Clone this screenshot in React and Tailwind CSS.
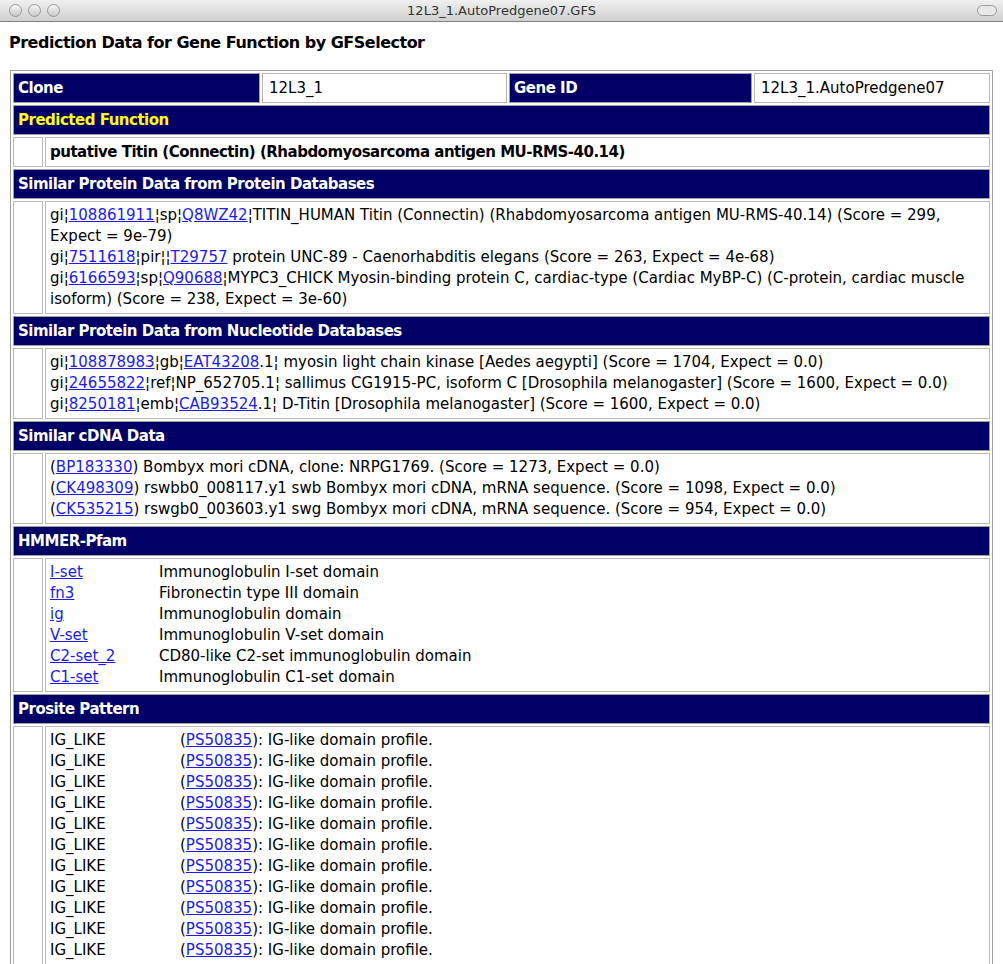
const L = ({ children }) => <a className="text-[#1a1aff] underline">{children}</a>;
const Head = ({ children, yellow }) => (
  <tr><td colSpan={4} className={`bg-[#000066] border border-[#a0a0a0] px-[4px] h-[30px] font-bold tracking-[-0.5px] ${yellow ? "text-[#ffff00]" : "text-white"}`}>{children}</td></tr>
);
const Body = ({ children }) => (
  <tr>
    <td className="border border-[#b8b8b8]"></td>
    <td colSpan={3} className="border border-[#b8b8b8] px-[4px] py-[3px] leading-[21px]">{children}</td>
  </tr>
);
const hm = [["I-set","Immunoglobulin I-set domain"],["fn3","Fibronectin type III domain"],["ig","Immunoglobulin domain"],["V-set","Immunoglobulin V-set domain"],["C2-set_2","CD80-like C2-set immunoglobulin domain"],["C1-set","Immunoglobulin C1-set domain"]];
export default function App() {
  return (
    <div className="w-[1003px] h-[964px] bg-white overflow-hidden relative text-[14px] text-black" style={{fontFamily:'"DejaVu Sans", sans-serif'}}>
      <div className="h-[22px] bg-gradient-to-b from-[#f0f0f0] to-[#d0d0d0] border-b border-[#808080] flex items-center relative">
        <div className="flex gap-[6px] ml-[9px]">
          {[0,1,2].map(i=><div key={i} className="w-[13px] h-[13px] rounded-full border border-[#999] bg-gradient-to-b from-[#f8f8f8] to-[#c8c8c8]"/>)}
        </div>
        <div className="absolute left-0 right-0 text-center text-[13px] text-[#333]">12L3_1.AutoPredgene07.GFS</div>
        <div className="absolute right-[6px] top-[5px] w-[20px] h-[11px] rounded-full border border-[#999] bg-[#e8e8e8]"/>
      </div>
      <div className="font-bold text-[16px] tracking-[-0.5px] ml-[9px] mt-[9px]">Prediction Data for Gene Function by GFSelector</div>
      <table className="ml-[10px] mt-[15px] w-[983px] table-fixed border border-[#a0a0a0] border-separate border-spacing-[2px] text-[15px]">
        <colgroup><col className="w-[30px]"/><col className="w-[215px]"/><col className="w-[245px]"/><col/></colgroup>
        <tbody>
          <tr>
            <td colSpan={2} className="bg-[#000066] text-white font-bold border border-[#a0a0a0] px-[4px] h-[30px] tracking-[-0.5px]">Clone</td>
            <td className="border border-[#b8b8b8] px-[6px]">12L3_1</td>
            <td className="p-0">
              <div className="flex h-[30px]">
                <div className="bg-[#000066] text-white font-bold border border-[#a0a0a0] px-[4px] w-[243px] flex items-center tracking-[-0.5px]">Gene ID</div>
                <div className="border border-[#b8b8b8] px-[6px] flex-1 ml-[2px] flex items-center">12L3_1.AutoPredgene07</div>
              </div>
            </td>
          </tr>
          <Head yellow>Predicted Function</Head>
          <tr><td className="border border-[#b8b8b8]"></td><td colSpan={3} className="border border-[#b8b8b8] px-[4px] h-[30px] font-bold tracking-[-0.5px]">putative Titin (Connectin) (Rhabdomyosarcoma antigen MU-RMS-40.14)</td></tr>
          <Head>Similar Protein Data from Protein Databases</Head>
          <Body>
            <div>gi¦<L>108861911</L>¦sp¦<L>Q8WZ42</L>¦TITIN_HUMAN Titin (Connectin) (Rhabdomyosarcoma antigen MU-RMS-40.14) (Score = 299, Expect = 9e-79)</div>
            <div>gi¦<L>7511618</L>¦pir¦¦<L>T29757</L> protein UNC-89 - Caenorhabditis elegans (Score = 263, Expect = 4e-68)</div>
            <div>gi¦<L>6166593</L>¦sp¦<L>Q90688</L>¦MYPC3_CHICK Myosin-binding protein C, cardiac-type (Cardiac MyBP-C) (C-protein, cardiac muscle isoform) (Score = 238, Expect = 3e-60)</div>
          </Body>
          <Head>Similar Protein Data from Nucleotide Databases</Head>
          <Body>
            <div>gi¦<L>108878983</L>¦gb¦<L>EAT43208</L>.1¦ myosin light chain kinase [Aedes aegypti] (Score = 1704, Expect = 0.0)</div>
            <div>gi¦<L>24655822</L>¦ref¦NP_652705.1¦ sallimus CG1915-PC, isoform C [Drosophila melanogaster] (Score = 1600, Expect = 0.0)</div>
            <div>gi¦<L>8250181</L>¦emb¦<L>CAB93524</L>.1¦ D-Titin [Drosophila melanogaster] (Score = 1600, Expect = 0.0)</div>
          </Body>
          <Head>Similar cDNA Data</Head>
          <Body>
            <div>(<L>BP183330</L>) Bombyx mori cDNA, clone: NRPG1769. (Score = 1273, Expect = 0.0)</div>
            <div>(<L>CK498309</L>) rswbb0_008117.y1 swb Bombyx mori cDNA, mRNA sequence. (Score = 1098, Expect = 0.0)</div>
            <div>(<L>CK535215</L>) rswgb0_003603.y1 swg Bombyx mori cDNA, mRNA sequence. (Score = 954, Expect = 0.0)</div>
          </Body>
          <Head>HMMER-Pfam</Head>
          <Body>
            {hm.map(([a,b])=><div key={a} className="flex"><span className="w-[109px]"><L>{a}</L></span><span>{b}</span></div>)}
          </Body>
          <Head>Prosite Pattern</Head>
          <Body>
            {Array.from({length:11}).map((_,i)=><div key={i} className="flex"><span className="w-[130px]">IG_LIKE</span><span>(<L>PS50835</L>): IG-like domain profile.</span></div>)}
          </Body>
        </tbody>
      </table>
    </div>
  );
}
